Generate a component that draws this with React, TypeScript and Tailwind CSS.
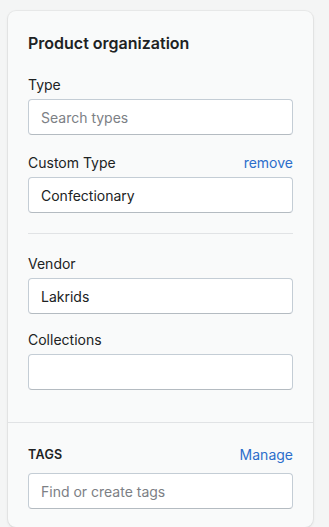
import { useState } from 'react'

function Field({ label, placeholder, value, action }: { label: string; placeholder?: string; value?: string; action?: string }) {
  return (
    <div>
      <div className="flex h-5 items-center justify-between">
        <label className="text-[14px] leading-5 text-[#202223]">{label}</label>
        {action && <button className="text-[14px] leading-5 text-[#2c6ecb]">{action}</button>}
      </div>
      <input
        className="mt-1 block h-9 w-full rounded-[4px] border border-[#c4cdd5] border-b-[#b4bbc1] bg-white px-3 text-[14px] text-[#202223] outline-none placeholder:text-[#7c8085]"
        placeholder={placeholder}
        defaultValue={value}
      />
    </div>
  )
}

export default function App() {
  const [tags] = useState('')

  return (
    <div className="min-h-[527px] bg-[#f4f5f5] pt-[11px] pr-4 pl-2 font-['Inter',sans-serif]">
      <div className="rounded-lg bg-[#f9fafa] shadow-[0_0_0_1px_rgba(63,63,68,0.05),0_1px_3px_rgba(63,63,68,0.12)]">
        {/* Organization */}
        <div className="px-5 pt-5 pb-8">
          <h2 className="text-[16px] leading-6 font-semibold text-[#202223]">Product organization</h2>
          <div className="mt-5">
            <Field label="Type" placeholder="Search types" />
          </div>
          <div className="mt-[18px]">
            <Field label="Custom Type" value="Confectionary" action="remove" />
          </div>
          <div className="my-5 h-px bg-[#e1e3e5]" />
          <Field label="Vendor" value="Lakrids" />
          <div className="mt-4">
            <Field label="Collections" />
          </div>
        </div>

        {/* Tags */}
        <div className="border-t border-[#e1e3e5] px-5 pt-5 pb-[18px]">
          <div className="flex h-6 items-center justify-between">
            <h3 className="text-[12.5px] leading-4 font-semibold tracking-wide text-[#202223]">TAGS</h3>
            <button className="text-[14px] leading-5 text-[#2c6ecb]">Manage</button>
          </div>
          <input
            className="mt-[6px] block h-9 w-full rounded-[4px] border border-[#c4cdd5] border-b-[#b4bbc1] bg-white px-3 text-[14px] text-[#202223] outline-none placeholder:text-[#7c8085]"
            placeholder="Find or create tags"
            defaultValue={tags}
          />
        </div>
      </div>
    </div>
  )
}
